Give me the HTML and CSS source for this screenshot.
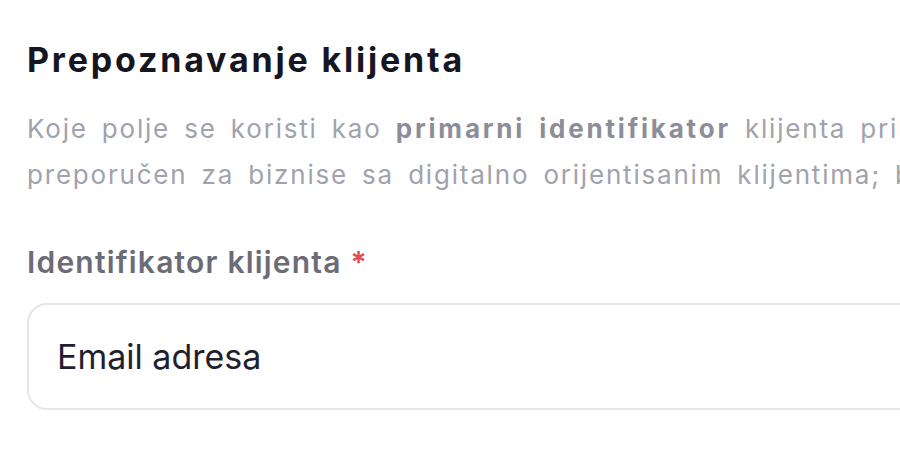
FILE: index.html
```html
<!DOCTYPE html>
<html lang="sr">
<head>
  <meta charset="UTF-8">
  <title>Prepoznavanje klijenta</title>
  <link rel="stylesheet" href="styles.css">
</head>
<body>
  <section class="panel">
    <h2 class="panel-title">Prepoznavanje klijenta</h2>
    <p class="panel-desc">Koje polje se koristi kao <b>primarni identifikator</b> klijenta prilikom prijave. Email adresa je<br>preporučen za biznise sa digitalno orijentisanim klijentima; broj telefona za lokalne biznise.</p>

    <div class="field">
      <label class="field-label">Identifikator klijenta <span class="req">*</span></label>
      <div class="select">Email adresa</div>
    </div>
  </section>
</body>
</html>
```

FILE: styles.css
```css
body {
  margin: 0;
  background: #fff;
  font-family: Inter, "Noto Sans", sans-serif;
  overflow: hidden;
}
.panel {
  width: 1400px;
  padding: 34px 0 0 27px;
}
.panel-title {
  margin: 0;
  font-size: 34px;
  line-height: 52px;
  font-weight: 700;
  letter-spacing: 2.8px;
  color: #161622;
}
.panel-desc {
  margin: 20px 0 0;
  white-space: nowrap;
  font-size: 26px;
  line-height: 46px;
  letter-spacing: 1.8px;
  word-spacing: 5px;
  color: #a2a2ac;
}
.panel-desc b {
  font-weight: 700;
  letter-spacing: 2.8px;
  color: #8d8d98;
}
.field {
  margin-top: 44px;
}
.field-label {
  display: block;
  font-size: 30px;
  line-height: 40px;
  font-weight: 600;
  letter-spacing: 1.2px;
  color: #6c6c76;
}
.req {
  color: #e5484d;
}
.select {
  margin-top: 21px;
  height: 107px;
  box-sizing: border-box;
  border: 2px solid #e6e6e6;
  border-radius: 20px;
  padding: 0 28px;
  display: flex;
  align-items: center;
  font-size: 34px;
  color: #1f1f2e;
}
```
